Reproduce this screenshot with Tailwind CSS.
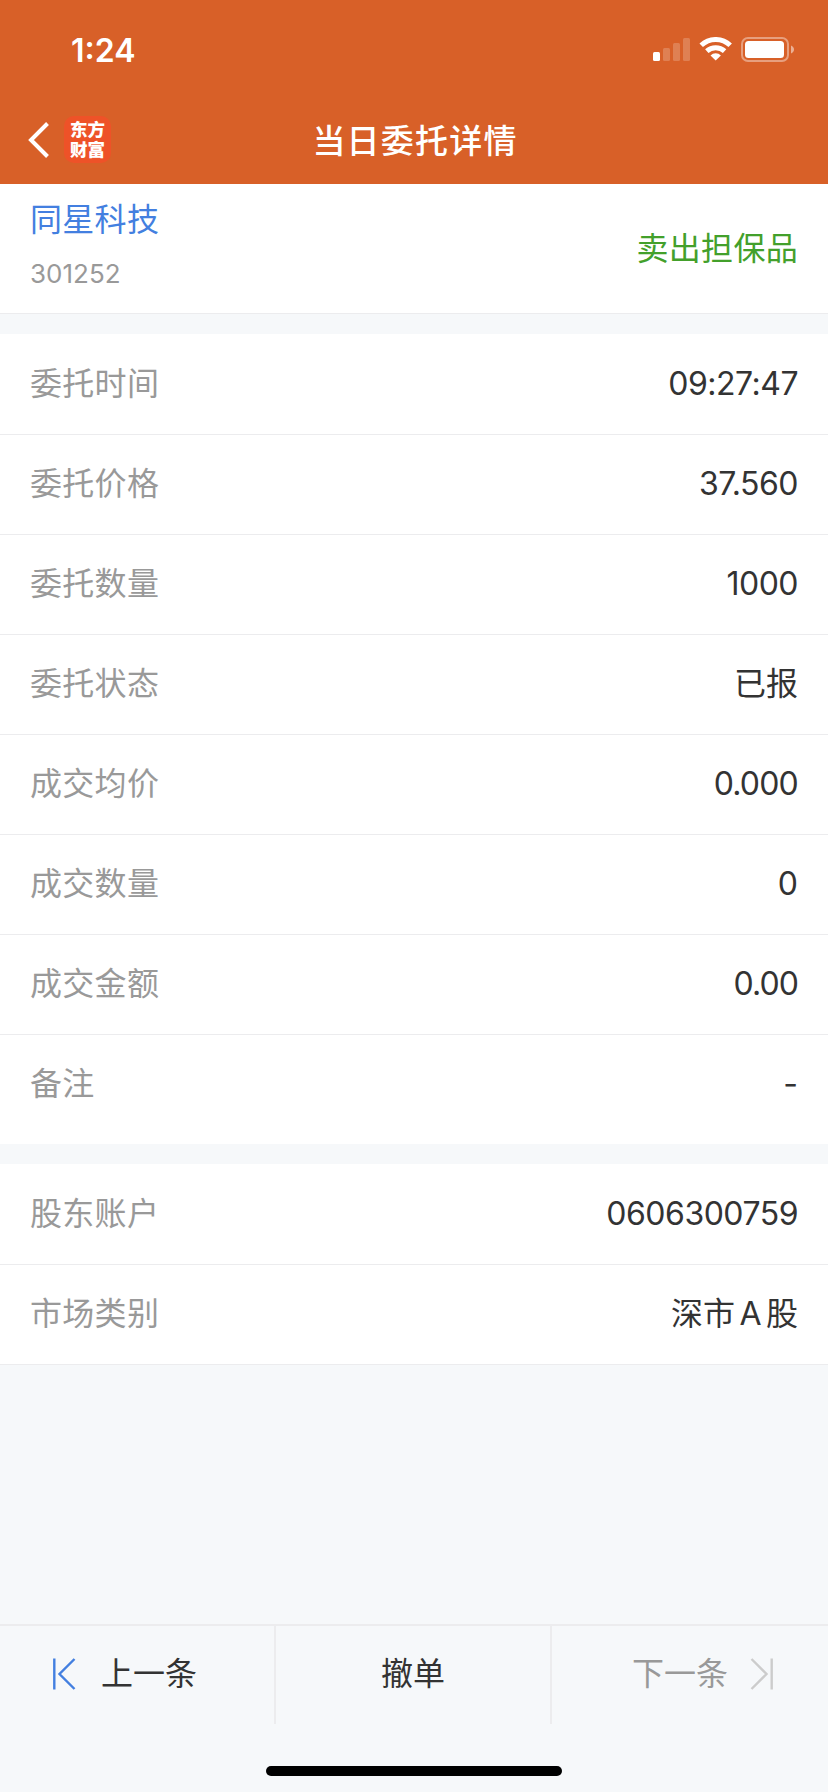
<!DOCTYPE html>
<html lang="zh-CN">
<head>
<meta charset="utf-8">
<title>当日委托详情</title>
<script src="https://cdn.jsdelivr.net/npm/@tailwindcss/browser@4"></script>
</head>
<body class="bg-[#f6f8fa]">
<div class="flex h-[1792px] w-[828px] flex-col overflow-hidden bg-[#f6f8fa] font-['Inter','Noto_Sans_CJK_SC',sans-serif] text-[32px] leading-[48px] text-[#333333]">
  <header class="flex h-[184px] shrink-0 flex-col bg-[#d86028] text-white">
    <div class="flex h-[98px] items-center justify-between pt-[2px] pr-[33px] pl-[71px]">
      <span class="pt-[2px] text-[32px] font-semibold">1:24</span>
      <div class="flex items-center">
        <svg width="38" height="24" viewBox="0 0 38 24" fill="#fff"><rect x="0" y="14" width="7" height="9" rx="1.500"/><g opacity=".2"><rect x="10" y="10" width="7" height="13" rx="1.500"/><rect x="20" y="5" width="7" height="18" rx="1.500"/><rect x="30" y="0" width="7" height="23" rx="1.500"/></g></svg>
        <svg class="mb-[2px] ml-[8px]" width="34" height="24" viewBox="0 0 34 24"><g fill="none" stroke="#fff" stroke-width="5"><path d="M2.200 8.300A21 21 0 0 1 31.200 8.300"/><path d="M7.800 14.200A13.200 13.200 0 0 1 25.600 14.200"/></g><path fill="#fff" d="M16.700 23.500l-5.200-5.100a7.500 7.500 0 0 1 10.400 0z"/></svg>
        <svg class="ml-[8px]" width="54" height="26" viewBox="0 0 54 26"><rect x="1" y="1" width="46" height="23" rx="6" fill="none" stroke="#fff" stroke-opacity=".4" stroke-width="2"/><rect x="4" y="4" width="39" height="17" rx="3.500" fill="#fff"/><path d="M50 8.500c4 1.500 4 6.500 0 8z" fill="#fff" fill-opacity=".5"/></svg>
      </div>
    </div>
    <div class="grid h-[86px] grid-cols-[1fr_auto_1fr] items-center">
      <div class="flex items-center pb-[3px] pl-[28px]">
        <svg width="22" height="36" viewBox="0 0 22 36" fill="none" stroke="#fff" stroke-width="4"><path d="M19.500 1.500L3 18L19.500 34.500"/></svg>
        <div class="ml-[14px] flex h-[47px] w-[47px] flex-col items-center justify-center rounded-[10px] bg-[#ee5228] text-[17.500px] leading-[20px] font-black">
          <span>东方</span><span>财富</span>
        </div>
      </div>
      <h1 class="pl-[2px] text-[33px] font-medium tracking-[1.200px]">当日委托详情</h1>
      <span></span>
    </div>
  </header>

  <section class="flex h-[130px] shrink-0 items-center justify-between border-b border-[#ececee] bg-white px-[30px]">
    <div class="flex h-full flex-col pt-[12px]">
      <span class="tracking-[0.300px] text-[#437fe0]">同星科技</span>
      <span class="mt-[10px] text-[26px] leading-[40px] text-[#999999]">301252</span>
    </div>
    <span class="pt-[1px] tracking-[0.300px] text-[#43a02b]">卖出担保品</span>
  </section>

  <section class="mt-[20px] flex h-[810px] shrink-0 flex-col bg-white pt-px">
    <div class="flex h-[100px] items-center justify-between border-b border-[#ececee] px-[30px] pb-[2px]"><span class="tracking-[0.300px] text-[#999999]">委托时间</span><span class="tracking-[-0.500px]">09:27:47</span></div>
    <div class="flex h-[100px] items-center justify-between border-b border-[#ececee] px-[30px] pb-[2px]"><span class="tracking-[0.300px] text-[#999999]">委托价格</span><span class="tracking-[-0.500px]">37.560</span></div>
    <div class="flex h-[100px] items-center justify-between border-b border-[#ececee] px-[30px] pb-[2px]"><span class="tracking-[0.300px] text-[#999999]">委托数量</span><span class="tracking-[-0.500px]">1000</span></div>
    <div class="flex h-[100px] items-center justify-between border-b border-[#ececee] px-[30px] pb-[2px]"><span class="tracking-[0.300px] text-[#999999]">委托状态</span><span>已报</span></div>
    <div class="flex h-[100px] items-center justify-between border-b border-[#ececee] px-[30px] pb-[2px]"><span class="tracking-[0.300px] text-[#999999]">成交均价</span><span class="tracking-[-0.800px]">0.000</span></div>
    <div class="flex h-[100px] items-center justify-between border-b border-[#ececee] px-[30px] pb-[2px]"><span class="tracking-[0.300px] text-[#999999]">成交数量</span><span>0</span></div>
    <div class="flex h-[100px] items-center justify-between border-b border-[#ececee] px-[30px] pb-[2px]"><span class="tracking-[0.300px] text-[#999999]">成交金额</span><span class="tracking-[-0.900px]">0.00</span></div>
    <div class="flex h-[99px] items-center justify-between px-[30px] pb-[2px]"><span class="tracking-[0.300px] text-[#999999]">备注</span><span>-</span></div>
  </section>

  <section class="mt-[20px] flex h-[201px] shrink-0 flex-col bg-white pt-px">
    <div class="flex h-[100px] items-center justify-between border-b border-[#ececee] px-[30px] pb-[2px]"><span class="tracking-[0.300px] text-[#999999]">股东账户</span><span class="tracking-[-0.500px]">0606300759</span></div>
    <div class="flex h-[100px] items-center justify-between border-b border-[#ececee] px-[30px] pb-[2px]"><span class="tracking-[0.300px] text-[#999999]">市场类别</span><span>深市<span class="px-[4.500px]">A</span>股</span></div>
  </section>

  <footer class="mt-auto flex h-[168px] shrink-0 flex-col border-t-2 border-[#ececee]">
    <nav class="grid h-[98px] grid-cols-3">
      <div class="flex items-center border-r-2 border-[#ececee] pb-[2px] pl-[52px]">
        <svg width="24" height="32" viewBox="0 0 24 32" fill="none" stroke="#437fe0" stroke-width="2.400"><path d="M2.300 .5V31.500M22.500 1L7.500 16L22.500 31"/></svg>
        <span class="ml-[25px]">上一条</span>
      </div>
      <div class="flex items-center justify-center border-r-2 border-[#ececee] pb-[2px]">撤单</div>
      <div class="flex items-center justify-end pr-[54px] pb-[2px]">
        <span class="text-[#999999]">下一条</span>
        <svg class="ml-[22px]" width="24" height="32" viewBox="0 0 24 32" fill="none" stroke="#cccccc" stroke-width="2.400"><path d="M21.700 .5V31.500M1.500 1L16.500 16L1.500 31"/></svg>
      </div>
    </nav>
    <div class="mx-auto mt-[42px] h-[10px] w-[296px] rounded-full bg-black"></div>
  </footer>
</div>
</body>
</html>
